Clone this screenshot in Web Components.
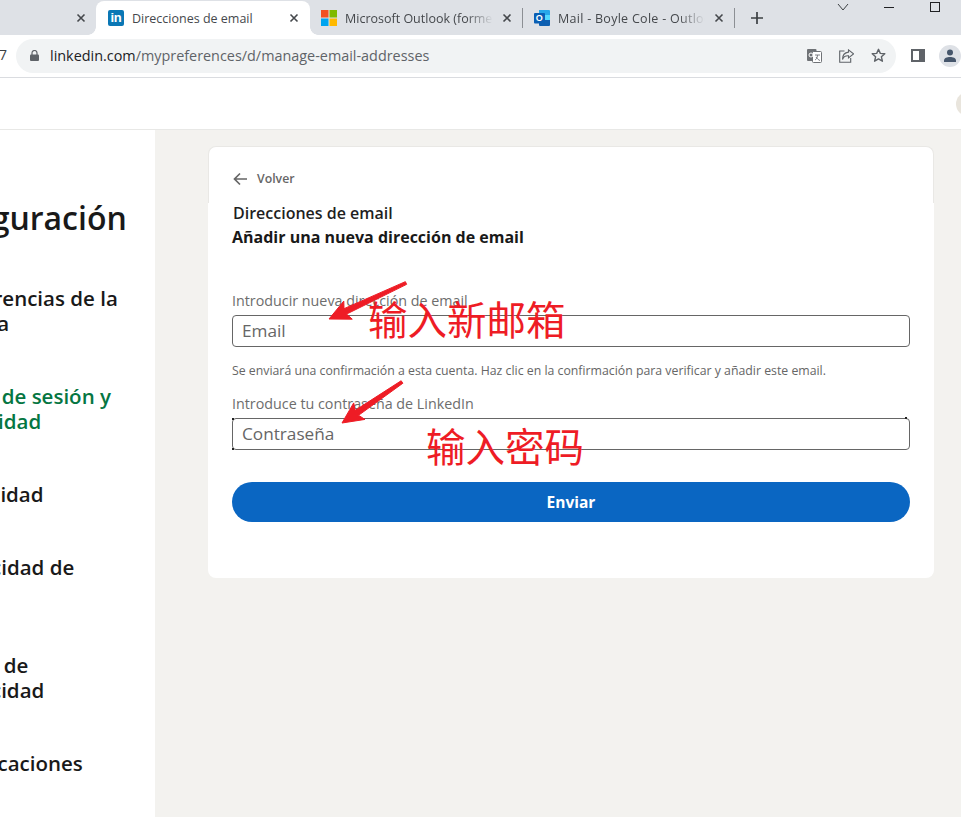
<!DOCTYPE html>
<html lang="es">
<head>
<meta charset="utf-8">
<title>Direcciones de email</title>
<style>
html, body { margin: 0; height: 100%; overflow: hidden; background: #fff; }
body { font-family: "Open Sans", "Noto Sans", sans-serif; }
</style>
</head>
<body>
<browser-window>
  <tab-strip>
    <browser-tab closable width="96" kind="blank"></browser-tab>
    <browser-tab closable active width="214" kind="linkedin">Direcciones de email</browser-tab>
    <browser-tab closable width="213" kind="windows">Microsoft Outlook (formerly</browser-tab>
    <browser-tab closable width="212" kind="outlook">Mail - Boyle Cole - Outlook</browser-tab>
  </tab-strip>
  <address-bar host="linkedin.com" path="/mypreferences/d/manage-email-addresses"></address-bar>
  <site-header></site-header>
  <settings-page>
    <settings-sidebar slot="side">
      <sidebar-title offset="-89">Configuración</sidebar-title>
      <sidebar-item offset="-59" top="48" lines="Preferencias de la|cuenta"></sidebar-item>
      <sidebar-item offset="-57" top="48" active lines="Inicio de sesión y|seguridad"></sidebar-item>
      <sidebar-item offset="-58" top="48" lines="Visibilidad"></sidebar-item>
      <sidebar-item offset="-59" top="48" lines="Privacidad de|datos"></sidebar-item>
      <sidebar-item offset="-59" top="48" lines="Datos de|publicidad"></sidebar-item>
      <sidebar-item offset="-58" top="48" lines="Notificaciones"></sidebar-item>
    </settings-sidebar>
    <email-card></email-card>
  </settings-page>
  <note-mark tip="329,319" tail="406,283" label="输入新邮箱" lx="368" ly="294"></note-mark>
  <note-mark tip="342,423" tail="402,382" label="输入密码" lx="426" ly="421"></note-mark>
</browser-window>

<script>
// browser chrome ------------------------------------------------------------
class BrowserWindow extends HTMLElement {
    constructor() {
        super();
        this.attachShadow({ mode: 'open' }).innerHTML = `
<style>
:host { display: flex; flex-direction: column; position: relative; width: 961px; height: 817px; overflow: hidden; }
</style>
<slot></slot>`;
    }
}

class TabStrip extends HTMLElement {
    constructor() {
        super();
        this.attachShadow({ mode: 'open' }).innerHTML = `
<style>
:host { display: flex; align-items: flex-end; height: 35px; background: #dee1e6; flex: none; position: relative; }
.new { margin: 0 0 0 10px; width: 24px; height: 34px; display: flex; align-items: center; justify-content: center; }
.controls { position: absolute; top: 0; left: 0; right: 0; height: 14px; pointer-events: none; }
.controls svg { position: absolute; top: 0; }
</style>
<slot></slot>
<div class="new"><svg width="14" height="14" viewBox="0 0 14 14"><path d="M7 1v12M1 7h12" stroke="#3c4043" stroke-width="1.7"/></svg></div>
<div class="controls">
  <svg style="left:836px" width="14" height="12" viewBox="0 0 14 12"><path d="M2 4l5 6 5-6" fill="none" stroke="#3c4043" stroke-width="1"/></svg>
  <svg style="left:884px" width="10" height="12" viewBox="0 0 10 12"><path d="M0 7.5h10" stroke="#202124" stroke-width="1"/></svg>
  <svg style="left:930px" width="11" height="12" viewBox="0 0 11 12"><rect x=".5" y="2.5" width="9" height="9" fill="none" stroke="#202124"/></svg>
</div>`;
    }
}

const TAB_ICONS = {
    blank: '',
    linkedin: `<span class="li">in</span>`,
    windows: `<svg width="16" height="16" viewBox="0 0 16 16"><rect width="7.5" height="7.5" fill="#f25022"/><rect x="8.5" width="7.5" height="7.5" fill="#7fba00"/><rect y="8.5" width="7.5" height="7.5" fill="#00a4ef"/><rect x="8.5" y="8.5" width="7.5" height="7.5" fill="#ffb900"/></svg>`,
    outlook: `<span class="ol"><svg width="16" height="16" viewBox="0 0 16 16"><path d="M5 0h10a1 1 0 0 1 1 1v4H5z" fill="#28a8ea"/><path d="M5 5h5v5H5z" fill="#0078d4"/><path d="M10 5h6v5h-6z" fill="#50d9ff"/><path d="M5 10h11v5a1 1 0 0 1-1 1H6a1 1 0 0 1-1-1z" fill="#0f5fb0"/><rect y="3" width="11" height="10.500" rx="1" fill="#0a5fb4"/></svg><b>O</b></span>`
};

class BrowserTab extends HTMLElement {
    constructor() {
        super();
        this.attachShadow({ mode: 'open' }).innerHTML = `
<style>
:host { display: flex; align-items: center; box-sizing: border-box; height: 34px; position: relative; flex: none;
  font: 12.5px "Open Sans", "Noto Sans", sans-serif; color: #45484c; padding: 0 11px 0 11px; }
:host([active]) { background: #fff; border-radius: 8px 8px 0 0; padding-left: 12px; }
:host([kind="blank"]) { padding-right: 10px; }
:host(:not([active]):not([kind="blank"]))::after { content: ""; position: absolute; right: 0; top: 7px; height: 20px; width: 1px; background: #8c8f94; }
:host([kind="outlook"]) { letter-spacing: .28px; }
:host([active])::before, :host([active])::after { content: ""; position: absolute; bottom: 0; width: 8px; height: 8px; }
:host([active])::before { left: -8px; background: radial-gradient(circle at 0 0, transparent 7.5px, #fff 8px); }
:host([active])::after { right: -8px; background: radial-gradient(circle at 100% 0, transparent 7.5px, #fff 8px); }
.icon { width: 16px; height: 16px; flex: none; margin-right: 8px; display: flex; }
.icon:empty { display: none; }
.li { display: block; width: 16px; height: 16px; background: #0a77b5; border-radius: 2px; color: #fff; font: bold 13px/16px "Liberation Sans", sans-serif; text-align: center; letter-spacing: -.3px; }
.ol { position: relative; display: block; width: 16px; height: 16px; }
.ol svg { position: absolute; left: 0; top: 0; }
.ol b { position: absolute; left: 0; top: 3px; width: 11px; color: #fff; font: bold 9px/10.5px "Liberation Sans", sans-serif; text-align: center; }
.title { flex: 1; min-width: 0; overflow: hidden; white-space: nowrap; }
.x { margin-left: 9px; flex: none; display: flex; }
</style>
<span class="icon"></span><span class="title"><slot></slot></span>
<svg class="x" width="10" height="10" viewBox="0 0 10 10"><path d="M1.500 1.500l7 7M8.500 1.500l-7 7" stroke="#45484c" stroke-width="1.600"/></svg>`;
    }

    connectedCallback() {
        const kind = this.getAttribute('kind');
        this.style.width = this.getAttribute('width') + 'px';
        this.shadowRoot.querySelector('.icon').innerHTML = TAB_ICONS[kind] || '';
        if (!this.hasAttribute('active') && kind !== 'blank') {
            // chrome fades a title that does not fit
            const title = this.shadowRoot.querySelector('.title');
            title.style.webkitMaskImage = 'linear-gradient(to right,#000 82%,transparent 100%)';
            title.style.maskImage = 'linear-gradient(to right,#000 82%,transparent 100%)';
        }
    }
}

class AddressBar extends HTMLElement {
    constructor() {
        super();
        this.attachShadow({ mode: 'open' }).innerHTML = `
<style>
:host { display: flex; align-items: center; height: 43px; box-sizing: border-box; border-bottom: 1px solid #dadce0; background: #fff; flex: none; padding: 0 0 1px 16px; position: relative; }
.clip { position: absolute; left: 0; top: 8px; font-size: 14px; color: #3c4043; line-height: 24px; width: 7px; overflow: hidden; direction: rtl; }
.omni { width: 880px; height: 34px; border-radius: 17px; background: #f1f3f4; display: flex; align-items: center; box-sizing: border-box; padding: 0 0 0 14px; flex: none; }
.url { font: 14.4px "Open Sans", "Noto Sans", sans-serif; color: #5f6368; margin-left: 11px; flex: 1; white-space: nowrap; }
.url b { font-weight: 400; color: #202124; }
.tools { display: flex; align-items: center; gap: 17px; margin-right: 10px; }
.side { margin-left: 15px; display: flex; align-items: center; }
.avatar { margin-left: 14px; width: 22px; height: 22px; border-radius: 50%; background: #dee1e6; display: flex; align-items: center; justify-content: center; flex: none; }
</style>
<span class="clip">7</span>
<div class="omni">
  <svg width="9" height="11" viewBox="0 0 9 11"><path d="M2 5V3a2.500 2.500 0 0 1 5 0v2" fill="none" stroke="#5f6368" stroke-width="1.200"/><rect y="4.500" width="9" height="6.500" rx="1" fill="#5f6368"/></svg>
  <span class="url"><b></b><span></span></span>
  <div class="tools">
    <svg width="15" height="14" viewBox="0 0 15 14"><rect x="0" y="0" width="9.500" height="12" rx="1" fill="#6f7276"/><rect x="5.500" y="2.500" width="9" height="11" rx="1" fill="#fff" stroke="#6f7276"/><circle cx="4" cy="6" r="2" fill="none" stroke="#fff" stroke-width="1"/><path d="M8 6h5M10.500 6c0 3-1.500 4.500-2.500 5M9 8c1 1.500 2.500 3 4 3.500" fill="none" stroke="#6f7276" stroke-width=".9"/></svg>
    <svg width="15" height="14" viewBox="0 0 15 14"><path d="M5.500 2H.7v11.300h11V9" fill="none" stroke="#5f6368" stroke-width="1.100"/><path d="M9.500 .9l5 4-5 4V6.700C6.500 6.500 4.500 7.500 3.500 10.500 3.500 6.500 5.500 3.500 9.500 3.100z" fill="none" stroke="#5f6368" stroke-width="1.100"/></svg>
    <svg width="15" height="15" viewBox="0 0 15 15"><path d="M7.500 1.300l1.800 4.100 4.500.4-3.400 3 1 4.400-3.900-2.300-3.900 2.300 1-4.400-3.400-3 4.500-.4z" fill="none" stroke="#5f6368" stroke-width="1.400" stroke-linejoin="round"/></svg>
  </div>
</div>
<div class="side">
  <svg width="14" height="13" viewBox="0 0 14 13"><rect x="1" y="1" width="12" height="11" fill="none" stroke="#5f6368" stroke-width="2"/><rect x="8" y="1" width="5" height="11" fill="#5f6368"/></svg>
  <span class="avatar"><svg width="14" height="13" viewBox="0 0 14 13"><circle cx="7" cy="3.500" r="3" fill="#46566b"/><path d="M1 13v-1.500C1 9 4 8 7 8s6 1 6 3.500V13z" fill="#46566b"/></svg></span>
</div>`;
    }

    connectedCallback() {
        this.shadowRoot.querySelector('.url b').textContent = this.getAttribute('host');
        this.shadowRoot.querySelector('.url span').textContent = this.getAttribute('path');
    }
}

// linkedin page ---------------------------------------------------------------
class SiteHeader extends HTMLElement {
    constructor() {
        super();
        this.attachShadow({ mode: 'open' }).innerHTML = `
<style>
:host { display: block; height: 52px; box-sizing: border-box; background: #fff; border-bottom: 1px solid #e8e8e6; flex: none; position: relative; overflow: hidden; }
.me { position: absolute; left: 956px; top: 14px; width: 24px; height: 24px; border-radius: 50%; background: #e9e5dd; }
</style>
<div class="me"></div>`;
    }
}

class SettingsPage extends HTMLElement {
    constructor() {
        super();
        this.attachShadow({ mode: 'open' }).innerHTML = `
<style>
:host { display: flex; flex: 1; min-height: 0; background: #f3f2ef; }
.side { width: 155px; flex: none; background: #fff; overflow: hidden; }
.main { padding: 17px 0 0 53px; flex: none; width: 726px; }
</style>
<div class="side"><slot name="side"></slot></div>
<div class="main"><slot></slot></div>`;
    }
}

class SettingsSidebar extends HTMLElement {
    constructor() {
        super();
        this.attachShadow({ mode: 'open' }).innerHTML = `
<style>
:host { display: block; padding-top: 68px; }
</style>
<slot></slot>`;
    }
}

class SidebarTitle extends HTMLElement {
    constructor() {
        super();
        this.attachShadow({ mode: 'open' }).innerHTML = `
<style>
:host { display: block; font: 600 32px/40px "Open Sans", "Noto Sans", sans-serif; color: #191919; white-space: nowrap; }
</style>
<slot></slot>`;
    }

    connectedCallback() {
        this.style.marginLeft = this.getAttribute('offset') + 'px';
    }
}

class SidebarItem extends HTMLElement {
    constructor() {
        super();
        this.attachShadow({ mode: 'open' }).innerHTML = `
<style>
:host { display: block; font: 600 20.500px/25px "Open Sans", "Noto Sans", sans-serif; color: #191919; white-space: nowrap; }
:host([active]) { color: #057642; }
</style>`;
    }

    connectedCallback() {
        this.style.marginLeft = this.getAttribute('offset') + 'px';
        this.style.marginTop = this.getAttribute('top') + 'px';
        for (const line of this.getAttribute('lines').split('|')) {
            const row = document.createElement('div');
            row.textContent = line;
            this.shadowRoot.appendChild(row);
        }
    }
}

class FormField extends HTMLElement {
    constructor() {
        super();
        this.attachShadow({ mode: 'open' }).innerHTML = `
<style>
:host { display: block; font-family: "Open Sans", "Noto Sans", sans-serif; }
label { display: block; font-size: 14.300px; line-height: 20px; color: #6d6d6d; margin-bottom: 4px; }
.box { box-sizing: border-box; height: 32px; border: 1px solid #666; border-radius: 4px; padding: 0 9px; font-size: 17.200px; line-height: 30px; color: #666; position: relative; }
:host([dotted]) .box::before { content: ""; position: absolute; left: -1px; top: -1px; width: 2px; height: 32px;
  background: linear-gradient(#222 2px, transparent 2px, transparent 30px, #222 30px); }
:host([dotted]) .box::after { content: ""; position: absolute; right: 2px; top: -2px; width: 2px; height: 2px; background: #222; }
</style>
<label></label><div class="box"></div>`;
    }

    connectedCallback() {
        this.shadowRoot.querySelector('label').textContent = this.getAttribute('label');
        this.shadowRoot.querySelector('.box').textContent = this.getAttribute('placeholder');
    }
}

class EmailCard extends HTMLElement {
    constructor() {
        super();
        this.attachShadow({ mode: 'open' }).innerHTML = `
<style>
:host { display: block; width: 726px; font-family: "Open Sans", "Noto Sans", sans-serif; margin-top: -1px; }
.back { box-sizing: border-box; height: 57px; background: #fff; border: 1px solid #e9e8e5; border-bottom: 0; border-radius: 8px 8px 0 0; padding: 24px 24px 0; display: flex; align-items: flex-start;
  font-size: 12.300px; font-weight: 600; color: #666; line-height: 16px; }
.back svg { margin: 1px 10px 0 0; }
.body { background: #fff; border-radius: 0 0 8px 8px; padding: 0 24px; height: 375px; box-sizing: border-box; }
h2 { margin: 0; padding: 0 0 0 1px; font-size: 16px; line-height: 20px; font-weight: 600; color: #1f1f1f; }
h3 { margin: 0; font-size: 16px; line-height: 28px; font-weight: 700; color: #191919; }
form-field.first { margin-top: 40px; }
form-field.second { margin-top: 15px; }
.hint { margin: 16px 0 0; font-size: 12.300px; line-height: 16px; color: #666; white-space: nowrap; }
button { display: block; width: 100%; height: 40px; margin-top: 32px; border: 0; border-radius: 20px; background: #0a66c2; color: #fff; font: 700 15.500px "Open Sans", "Noto Sans", sans-serif; }
</style>
<div class="back"><svg width="14" height="14" viewBox="0 0 14 14"><path d="M7 1.500L1.500 7 7 12.500M2 7h12" fill="none" stroke="#666" stroke-width="1.700"/></svg>Volver</div>
<div class="body">
  <h2>Direcciones de email</h2>
  <h3>Añadir una nueva dirección de email</h3>
  <form-field class="first" label="Introducir nueva dirección de email" placeholder="Email"></form-field>
  <p class="hint">Se enviará una confirmación a esta cuenta. Haz clic en la confirmación para verificar y añadir este email.</p>
  <form-field class="second" dotted label="Introduce tu contraseña de LinkedIn" placeholder="Contraseña"></form-field>
  <button type="button">Enviar</button>
</div>`;
    }
}

// red arrow and caption painted over the screenshot
class NoteMark extends HTMLElement {
    constructor() {
        super();
        this.attachShadow({ mode: 'open' }).innerHTML = `
<style>
:host { display: contents; }
svg { position: absolute; overflow: visible; }
span { position: absolute; font: 39.500px/48px "Noto Sans CJK SC", sans-serif; color: #ee1c25; white-space: nowrap; }
</style>
<svg width="961" height="817" viewBox="0 0 961 817" style="left:0;top:0"></svg><span></span>`;
    }

    connectedCallback() {
        const [tx, ty] = this.getAttribute('tip').split(',').map(Number);
        const [ax, ay] = this.getAttribute('tail').split(',').map(Number);
        const len = Math.hypot(ax - tx, ay - ty);
        const ux = (ax - tx) / len, uy = (ay - ty) / len;
        const nx = -uy, ny = ux;
        const pt = (d, w) => `${tx + ux * d + nx * w},${ty + uy * d + ny * w}`;
        this.shadowRoot.querySelector('svg').innerHTML =
            `<polygon fill="#ee1c25" stroke="#ee1c25" stroke-linejoin="round" points="${pt(0, 0)} ${pt(21, 10)} ${pt(18, 3)} ${pt(len, 1.5)} ${pt(len, -1.5)} ${pt(18, -3)} ${pt(21, -10)}"/>`;
        const label = this.shadowRoot.querySelector('span');
        label.textContent = this.getAttribute('label');
        label.style.left = this.getAttribute('lx') + 'px';
        label.style.top = this.getAttribute('ly') + 'px';
    }
}

customElements.define('browser-window', BrowserWindow);
customElements.define('tab-strip', TabStrip);
customElements.define('browser-tab', BrowserTab);
customElements.define('address-bar', AddressBar);
customElements.define('site-header', SiteHeader);
customElements.define('settings-page', SettingsPage);
customElements.define('settings-sidebar', SettingsSidebar);
customElements.define('sidebar-title', SidebarTitle);
customElements.define('sidebar-item', SidebarItem);
customElements.define('form-field', FormField);
customElements.define('email-card', EmailCard);
customElements.define('note-mark', NoteMark);
</script>
</body>
</html>
